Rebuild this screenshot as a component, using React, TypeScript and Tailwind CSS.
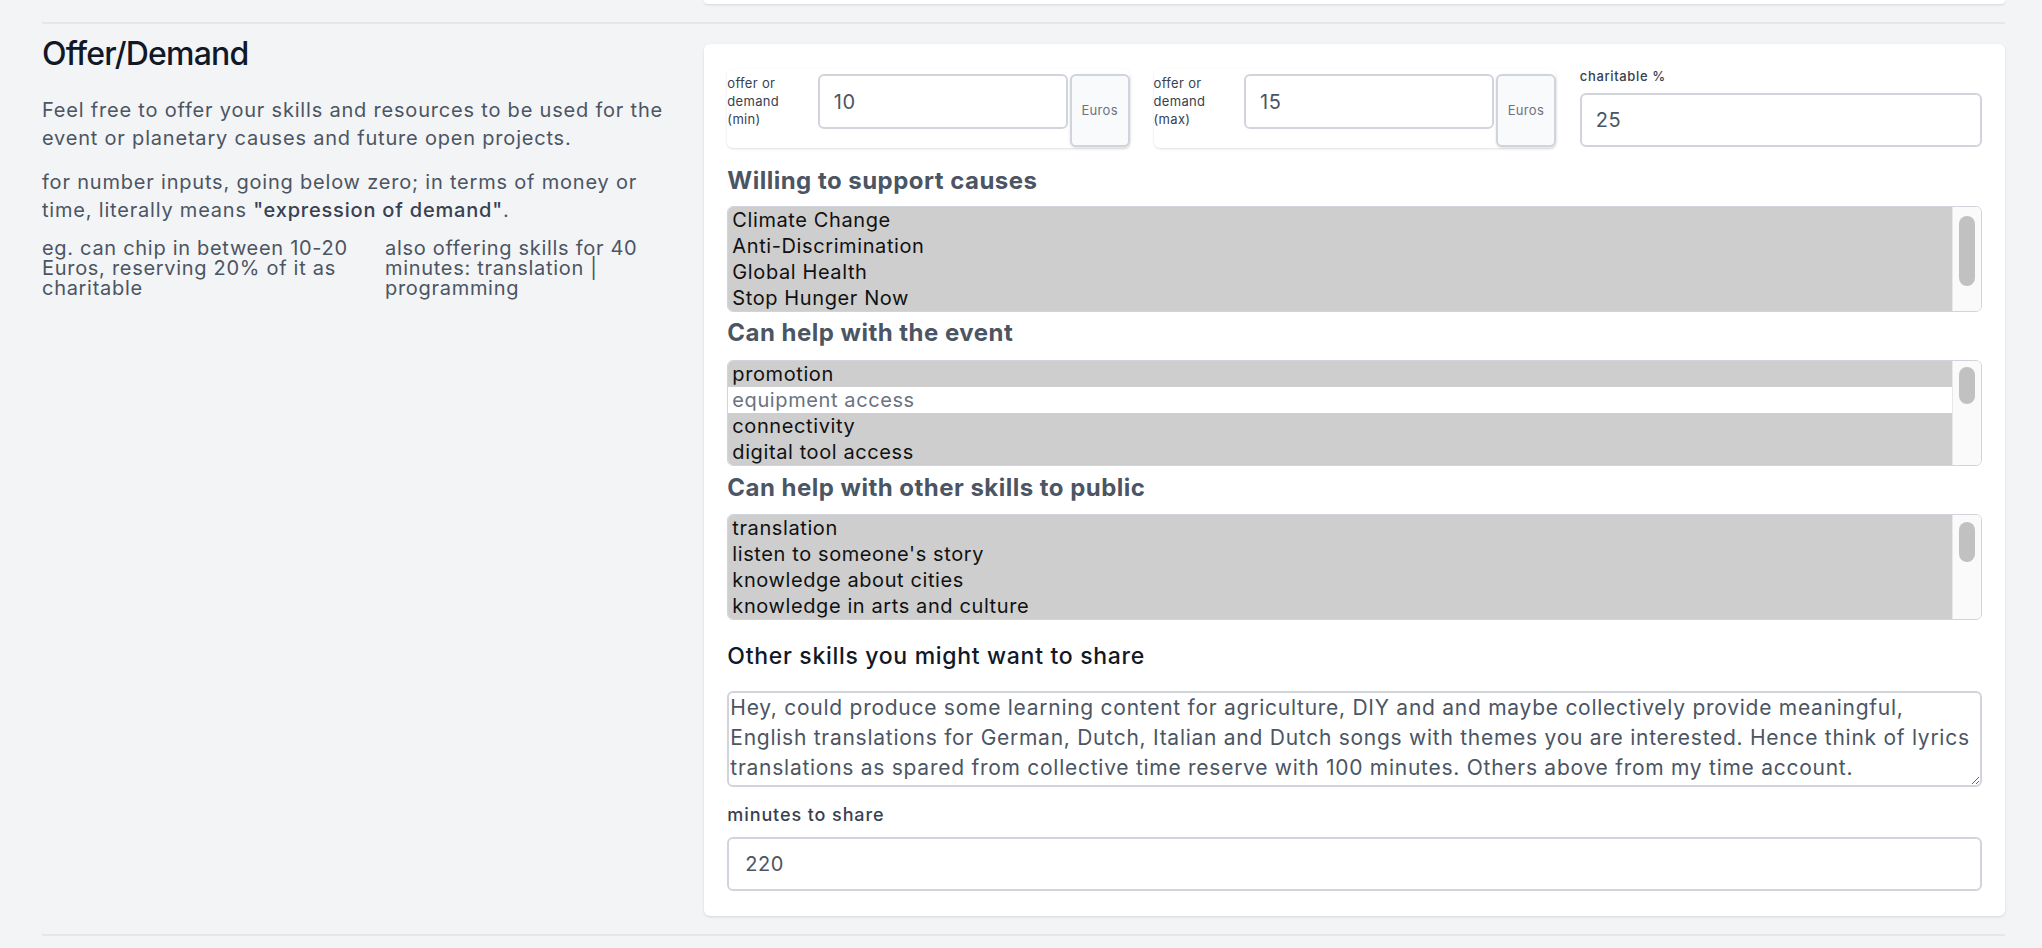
import { useState } from "react";

type Option = { label: string; selected: boolean };

const CAUSES: Option[] = [
  { label: "Climate Change", selected: true },
  { label: "Anti-Discrimination", selected: true },
  { label: "Global Health", selected: true },
  { label: "Stop Hunger Now", selected: true },
];

const EVENT_HELP: Option[] = [
  { label: "promotion", selected: true },
  { label: "equipment access", selected: false },
  { label: "connectivity", selected: true },
  { label: "digital tool access", selected: true },
];

const PUBLIC_SKILLS: Option[] = [
  { label: "translation", selected: true },
  { label: "listen to someone's story", selected: true },
  { label: "knowledge about cities", selected: true },
  { label: "knowledge in arts and culture", selected: true },
];

const SKILLS_TEXT =
  "Hey, could produce some learning content for agriculture, DIY and and maybe collectively provide meaningful,\nEnglish translations for German, Dutch, Italian and Dutch songs with themes you are interested. Hence think of lyrics\ntranslations as spared from collective time reserve with 100 minutes. Others above from my time account.";

function ListBox({
  options,
  thumbTop,
  thumbHeight,
}: {
  options: Option[];
  thumbTop: string;
  thumbHeight: string;
}) {
  const [items, setItems] = useState(options);
  const toggle = (i: number) =>
    setItems((prev) =>
      prev.map((o, idx) => (idx === i ? { ...o, selected: !o.selected } : o))
    );

  return (
    <div className="flex h-[106px] rounded-md border border-[#d1d5db] overflow-hidden bg-white">
      <div className="flex-1 flex flex-col">
        {items.map((o, i) => (
          <div
            key={o.label}
            onClick={() => toggle(i)}
            className={
              o.selected
                ? "h-[26px] px-[4px] text-xl leading-[26px] tracking-[0.03em] bg-[#cecece] text-[#111] cursor-default"
                : "h-[26px] px-[4px] text-xl leading-[26px] tracking-[0.03em] bg-white text-[#6b7280] cursor-default"
            }
          >
            {o.label}
          </div>
        ))}
      </div>
      {/* scrollbar */}
      <div className="w-[29px] bg-[#fafafa] border-l border-[#e8e8e8] flex justify-center">
        <div className={`w-4 rounded-full bg-[#c1c1c1] ${thumbTop} ${thumbHeight}`} />
      </div>
    </div>
  );
}

function RangeField({ label, value }: { label: string; value: string }) {
  const [val, setVal] = useState(value);
  return (
    <div className="flex items-start bg-white rounded-md shadow-sm pt-[5px] pb-[1px]">
      <label className="w-[91px] pr-2 text-[13px] leading-[18px] tracking-wide text-[#374151]">
        {label}
      </label>
      <input
        type="number"
        value={val}
        onChange={(e) => setVal(e.target.value)}
        className="w-[250px] h-[55px] border-2 border-[#d1d5db] rounded-md px-[14px] text-xl tracking-wide text-[#4b5563] focus:outline-none"
      />
      <div className="ml-[2px] w-[60px] h-[73px] flex items-center justify-center bg-[#f9fafb] border-2 border-[#d1d5db] rounded-md shadow text-[13px] tracking-wide text-[#6b7280]">
        Euros
      </div>
    </div>
  );
}

export default function App() {
  const [charitable, setCharitable] = useState("25");
  const [skills, setSkills] = useState(SKILLS_TEXT);
  const [minutes, setMinutes] = useState("220");

  return (
    <div className="min-h-screen bg-[#f3f4f6] pl-[42px] pr-[37px] font-['Inter','Noto_Sans',sans-serif]">
      {/* tail of the previous card */}
      <div className="grid grid-cols-3 gap-6">
        <div className="col-start-2 col-span-2 h-[4px] bg-white rounded-b-md shadow" />
      </div>
      <div className="mt-[18px] border-t-2 border-[#e5e7eb]" />

      <div className="grid grid-cols-3 gap-6 mt-[14px]">
        {/* left column */}
        <div>
          <h2 className="text-[32px] leading-none font-medium tracking-tight text-[#111827]">
            Offer/Demand
          </h2>
          <p className="mt-[26px] text-xl leading-7 tracking-[0.04em] text-[#4b5563]">
            Feel free to offer your skills and resources to be used for the event or
            planetary causes and future open projects.
          </p>
          <p className="mt-4 text-xl leading-7 tracking-[0.04em] text-[#4b5563]">
            for number inputs, going below zero; in terms of money or time, literally
            means <span className="font-medium text-[#374151]">"expression of demand"</span>.
          </p>
          <div className="mt-[14px] grid grid-cols-[313px_1fr] gap-[30px] text-xl leading-5 tracking-[0.035em] text-[#4b5563]">
            <p>eg. can chip in between 10-20 Euros, reserving 20% of it as charitable</p>
            <p>also offering skills for 40 minutes: translation | programming</p>
          </div>
        </div>

        {/* right card */}
        <div className="col-span-2 mt-[6px] bg-white rounded-md shadow px-[23px] pt-[25px] pb-[25px]">
          <div className="grid grid-cols-3 gap-6">
            <RangeField label="offer or demand (min)" value="10" />
            <RangeField label="offer or demand (max)" value="15" />
            <div>
              <label className="block text-[13px] leading-[14px] font-medium tracking-wider text-[#374151]">
                charitable %
              </label>
              <input
                type="number"
                value={charitable}
                onChange={(e) => setCharitable(e.target.value)}
                className="mt-[10px] w-full h-[54px] border-2 border-[#d1d5db] rounded-md px-[14px] text-xl tracking-wide text-[#4b5563] focus:outline-none"
              />
            </div>
          </div>

          <h3 className="mt-[19px] text-[24px] leading-7 font-bold tracking-[0.02em] text-[#4b5563]">
            Willing to support causes
          </h3>
          <div className="mt-[11px]">
            <ListBox options={CAUSES} thumbTop="mt-[9px]" thumbHeight="h-[70px]" />
          </div>

          <h3 className="mt-[7px] text-[24px] leading-7 font-bold tracking-[0.02em] text-[#4b5563]">
            Can help with the event
          </h3>
          <div className="mt-[13px]">
            <ListBox options={EVENT_HELP} thumbTop="mt-[6px]" thumbHeight="h-[37px]" />
          </div>

          <h3 className="mt-[8px] text-[24px] leading-7 font-bold tracking-[0.02em] text-[#4b5563]">
            Can help with other skills to public
          </h3>
          <div className="mt-[12px]">
            <ListBox options={PUBLIC_SKILLS} thumbTop="mt-[7px]" thumbHeight="h-[40px]" />
          </div>

          <h3 className="mt-[22px] text-[23px] leading-7 font-medium tracking-[0.03em] text-[#111827]">
            Other skills you might want to share
          </h3>
          <textarea
            value={skills}
            onChange={(e) => setSkills(e.target.value)}
            rows={3}
            className="mt-[21px] block w-full h-[96px] border-2 border-[#d1d5db] rounded-md px-[1px] pt-0 text-[21px] leading-[30px] tracking-[0.035em] text-[#4b5563] focus:outline-none"
          />

          <label className="block mt-[18px] text-[18px] leading-5 font-medium tracking-[0.05em] text-[#374151]">
            minutes to share
          </label>
          <input
            type="number"
            value={minutes}
            onChange={(e) => setMinutes(e.target.value)}
            className="mt-3 block w-full h-[54px] border-2 border-[#d1d5db] rounded-md px-[16px] text-xl tracking-wide text-[#4b5563] focus:outline-none"
          />
        </div>
      </div>

      <div className="mt-[18px] border-t-2 border-[#e5e7eb]" />
    </div>
  );
}
